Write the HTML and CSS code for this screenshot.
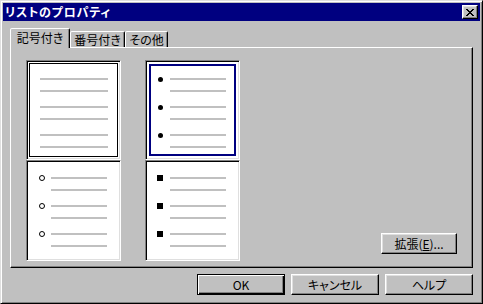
FILE: index.html
```html
<!DOCTYPE html>
<html lang="ja">
<head>
<meta charset="utf-8">
<title>リストのプロパティ</title>
<link rel="stylesheet" href="styles.css">
</head>
<body>
<div class="window">
  <div class="titlebar">
    <span class="title">リストのプロパティ</span>
    <button class="close" aria-label="閉じる">
      <svg width="8" height="7" viewBox="0 0 8 7" shape-rendering="crispEdges"><path d="M0 0h2v1h-2zM6 0h2v1h-2zM1 1h2v1h-2zM5 1h2v1h-2zM2 2h4v1h-4zM3 3h2v1h-2zM2 4h4v1h-4zM1 5h2v1h-2zM5 5h2v1h-2zM0 6h2v1h-2zM6 6h2v1h-2z" fill="#000"/></svg>
    </button>
  </div>
  <div class="client">
    <div class="tabs">
      <div class="tab active">記号付き</div>
      <div class="tab t2">番号付き</div>
      <div class="tab t3">その他</div>
    </div>
    <div class="panel">
      <div class="gallery">
        <div class="col">
          <div class="cell top focus plain">
            <div class="group"><div class="row"><span class="line"></span></div><div class="row"><span class="line"></span></div></div>
            <div class="group"><div class="row"><span class="line"></span></div><div class="row"><span class="line"></span></div></div>
            <div class="group"><div class="row"><span class="line"></span></div><div class="row"><span class="line"></span></div></div>
          </div>
          <div class="cell bottom">
            <div class="group"><div class="row"><span class="mark"><span class="ring"></span></span><span class="line"></span></div><div class="row"><span class="mark"></span><span class="line"></span></div></div>
            <div class="group"><div class="row"><span class="mark"><span class="ring"></span></span><span class="line"></span></div><div class="row"><span class="mark"></span><span class="line"></span></div></div>
            <div class="group"><div class="row"><span class="mark"><span class="ring"></span></span><span class="line"></span></div><div class="row"><span class="mark"></span><span class="line"></span></div></div>
          </div>
        </div>
        <div class="col">
          <div class="cell top selected">
            <div class="group"><div class="row"><span class="mark"><span class="disc"></span></span><span class="line"></span></div><div class="row"><span class="mark"></span><span class="line"></span></div></div>
            <div class="group"><div class="row"><span class="mark"><span class="disc"></span></span><span class="line"></span></div><div class="row"><span class="mark"></span><span class="line"></span></div></div>
            <div class="group"><div class="row"><span class="mark"><span class="disc"></span></span><span class="line"></span></div><div class="row"><span class="mark"></span><span class="line"></span></div></div>
          </div>
          <div class="cell bottom">
            <div class="group"><div class="row"><span class="mark"><span class="square"></span></span><span class="line"></span></div><div class="row"><span class="mark"></span><span class="line"></span></div></div>
            <div class="group"><div class="row"><span class="mark"><span class="square"></span></span><span class="line"></span></div><div class="row"><span class="mark"></span><span class="line"></span></div></div>
            <div class="group"><div class="row"><span class="mark"><span class="square"></span></span><span class="line"></span></div><div class="row"><span class="mark"></span><span class="line"></span></div></div>
          </div>
        </div>
      </div>
      <button class="btn ext">拡張(<u>E</u>)...</button>
    </div>
    <div class="buttons">
      <button class="btn default">OK</button>
      <button class="btn">キャンセル</button>
      <button class="btn">ヘルプ</button>
    </div>
  </div>
</div>
</body>
</html>
```

FILE: styles.css
```css
* { box-sizing: border-box; }
html, body { margin: 0; padding: 0; }
body {
  width: 483px;
  height: 304px;
  background: #c0c0c0;
  font-family: "Noto Sans CJK JP", "Noto Sans", sans-serif;
  font-size: 12px;
  font-feature-settings: "palt";
  color: #000;
  overflow: hidden;
}
.window {
  width: 483px;
  height: 304px;
  border: 1px solid;
  border-color: #dfdfdf #000 #000 #dfdfdf;
  box-shadow: inset 1px 1px #fff, inset -1px -1px #808080;
  padding: 2px;
  display: flex;
  flex-direction: column;
  background: #c0c0c0;
}
.titlebar {
  height: 18px;
  background: #000080;
  display: flex;
  align-items: center;
  justify-content: space-between;
  padding: 0 2px 0 2px;
}
.title {
  color: #fff;
  font-weight: bold;
  font-size: 12px;
  line-height: 18px;
  letter-spacing: 0.8px;
}
.close {
  width: 16px;
  height: 14px;
  padding: 0;
  margin: 0;
  background: #c0c0c0;
  border: 1px solid;
  border-color: #fff #000 #000 #fff;
  box-shadow: inset -1px -1px #808080, inset 1px 1px #dfdfdf;
  display: flex;
  align-items: center;
  justify-content: center;
}
.close svg { display: block; margin-left: -1px; }
.client {
  flex: 1;
  display: flex;
  flex-direction: column;
  padding: 7px 7px 0 7px;
}
.tabs {
  height: 19px;
  display: flex;
  align-items: flex-end;
  position: relative;
  z-index: 1;
}
.tab {
  height: 16px;
  border: 1px solid;
  border-bottom: none;
  border-color: #fff #000 transparent #fff;
  border-radius: 2px 2px 0 0;
  box-shadow: inset -1px 0 #808080;
  display: flex;
  align-items: center;
  justify-content: center;
  line-height: 1;
  background: #c0c0c0;
}
.tab.active {
  width: 60px;
  height: 20px;
  margin-bottom: -1px;
  padding-bottom: 1px;
}
.tab.t2 { width: 55px; }
.tab.t3 { width: 43px; }
.panel {
  height: 221px;
  border: 1px solid;
  border-color: #fff #000 #000 #fff;
  box-shadow: inset -1px -1px #808080;
  display: flex;
  justify-content: space-between;
  padding: 12px 15px 0 15px;
}
.gallery {
  display: flex;
  gap: 24px;
}
.col {
  display: flex;
  flex-direction: column;
  width: 95px;
}
.cell {
  background: #fff;
  border: 1px solid;
  border-color: #808080 #fff #fff #808080;
  box-shadow: inset 1px 1px #000, inset -1px -1px #dfdfdf;
  display: flex;
  flex-direction: column;
  gap: 14px;
  padding-left: 12px;
}
.cell.top { height: 100px; padding-top: 17px; }
.cell.bottom { height: 101px; padding-top: 16px; }
.cell.focus {
  box-shadow: inset 1px 1px #000, inset -1px -1px #dfdfdf, inset 0 0 0 2px #fff, inset 0 0 0 3px #000;
}
.cell.selected {
  box-shadow: inset 1px 1px #000, inset -1px -1px #dfdfdf, inset 0 0 0 3px #fff, inset 0 0 0 5px #000080;
}
.cell.plain { padding-left: 13px; }
.cell.plain .line { width: 68px; }
.group {
  display: flex;
  flex-direction: column;
  gap: 10px;
}
.row {
  height: 2px;
  display: flex;
  align-items: center;
}
.mark {
  width: 12px;
  height: 6px;
  flex: none;
  display: flex;
  align-items: center;
}
.line {
  width: 56px;
  height: 2px;
  background: #c0c0c0;
  flex: none;
}
.disc {
  width: 5px;
  height: 5px;
  border-radius: 50%;
  background: #000;
}
.ring {
  width: 6px;
  height: 6px;
  border-radius: 50%;
  border: 1px solid #000;
  background: #fff;
}
.square {
  width: 6px;
  height: 6px;
  background: #000;
  margin-left: -1px;
}
.btn {
  font-family: "Noto Sans CJK JP", "Noto Sans", sans-serif;
  font-size: 12px;
  font-feature-settings: "palt";
  color: #000;
  background: #c0c0c0;
  border: 1px solid;
  border-color: #fff #000 #000 #fff;
  box-shadow: inset -1px -1px #808080, inset 1px 1px #dfdfdf;
  padding: 0;
  margin: 0;
  height: 21px;
  line-height: 1;
  display: flex;
  align-items: center;
  justify-content: center;
}
.btn u { text-underline-offset: 1px; }
.ext {
  width: 76px;
  align-self: flex-end;
  margin-bottom: 13px;
}
.buttons {
  display: flex;
  justify-content: flex-end;
  gap: 6px;
  margin-top: 6px;
}
.buttons .btn { width: 88px; }
.btn.default {
  border-color: #000;
  box-shadow: inset 1px 1px #fff, inset -1px -1px #000, inset -2px -2px #808080;
}
```
